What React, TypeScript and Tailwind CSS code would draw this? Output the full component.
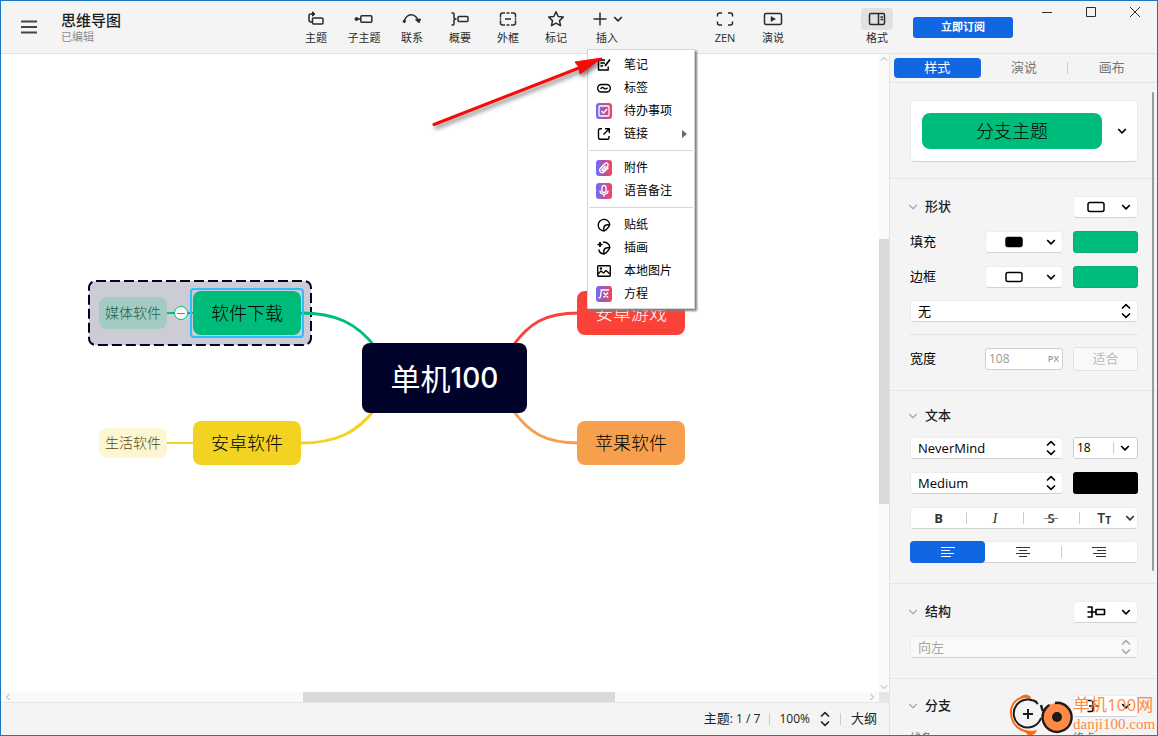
import type { ReactNode } from "react";

type IconProps = { children: ReactNode; w?: number; h?: number; sw?: number };

// viewBox is always 1:1 with the drawn size
const Icon = ({ children, w = 18, h = 18, sw = 1.5 }: IconProps) => (
  <svg
    width={w}
    height={h}
    viewBox={`0 0 ${w} ${h}`}
    fill="none"
    stroke="currentColor"
    strokeWidth={sw}
    strokeLinejoin="round"
    className="shrink-0"
  >
    {children}
  </svg>
);

const Down = ({ sw = 1.7 }: { sw?: number }) => (
  <Icon w={10} h={8} sw={sw}>
    <path d="M1.2 2 5 5.8 8.8 2" />
  </Icon>
);

const UpDown = () => (
  <Icon w={10} h={16} sw={1.6}>
    <path d="M1 5.5 5 1.700l4 3.800M1 10.500l4 3.800 4-3.800" />
  </Icon>
);

const BraceIcon = () => (
  <Icon w={20} h={14} sw={1.6}>
    <path d="M1.500 2H6v10H1.500M1.500 7H10" />
    <rect x="10" y="4.500" width="8.500" height="5" />
  </Icon>
);

const BranchIcon = () => (
  <Icon w={20} h={14} sw={1.6}>
    <path d="M1.500 1.500H5q2 0 2 2v7q0 2-2 2H1.500M3 7h4M9.500 7h3" />
  </Icon>
);

const tools = [
  {
    label: "主题",
    icon: (
      <Icon>
        <path d="M6 4H4Q2 4 2 6v4q0 2 2 2h1" />
        <path d="M5.500 1.800 8 4 5.500 6.200z" fill="currentColor" strokeWidth="1" />
        <rect x="5.500" y="8" width="10.500" height="6" rx="1" />
      </Icon>
    ),
  },
  {
    label: "子主题",
    icon: (
      <Icon w={20}>
        <circle cx="2.500" cy="9" r="1.500" fill="currentColor" strokeWidth="1" />
        <path d="M3 9h4" />
        <rect x="6.800" y="5.800" width="11" height="6.400" rx="1" />
      </Icon>
    ),
  },
  {
    label: "联系",
    icon: (
      <Icon w={20}>
        <path d="M2 11.500C5 2.500 13 2.500 16.500 11" />
        <path d="m13.500 9.800 5-.8-1.300 3.700z" fill="currentColor" strokeWidth="1" />
        <circle cx="2.300" cy="11.300" r=".9" fill="currentColor" />
      </Icon>
    ),
  },
  {
    label: "概要",
    icon: (
      <Icon w={20}>
        <path d="M1.500 3H3q1 0 1 1v3.500q0 1.500 2 1.500-2 0-2 1.500V14q0 1-1 1H1.500" />
        <rect x="8" y="6.500" width="10" height="5" rx="1" />
      </Icon>
    ),
  },
  {
    label: "外框",
    icon: (
      <Icon>
        <path d="M1.500 7.500V5q0-2 2-2H6M7.500 3h3M12 3h2.500q2 0 2 2v2.500M16.500 10.500V13q0 2-2 2H12M10.500 15h-3M6 15H3.500q-2 0-2-2v-2.500M1.500 8.300v1.500M16.500 8.300v1.500" />
        <path d="M6 9h6" />
      </Icon>
    ),
  },
  {
    label: "标记",
    icon: (
      <Icon>
        <path d="m9 1.800 2.200 4.700 5.100.6-3.800 3.500 1 5.100L9 13.200l-4.500 2.500 1-5.100L1.700 7.100l5.100-.6z" />
      </Icon>
    ),
  },
];

const rightTools = [
  {
    label: "ZEN",
    icon: (
      <Icon>
        <path d="M1.500 6.500V5q0-2 2-2H6M12 3h2.500q2 0 2 2v1.500M16.500 11.500V13q0 2-2 2H12M6 15H3.500q-2 0-2-2v-1.500" />
      </Icon>
    ),
  },
  {
    label: "演说",
    icon: (
      <Icon w={20}>
        <rect x="1.500" y="3.500" width="17" height="11" rx="1.500" />
        <path d="m8 6.500 4.500 2.500L8 11.500z" fill="currentColor" strokeWidth=".5" />
      </Icon>
    ),
  },
];

// gradient tile used by the paid features
const Badge = ({ children }: { children: ReactNode }) => (
  <span className="flex h-4 w-4 items-center justify-center rounded-[3px] bg-linear-to-r from-[#6d6cfb] via-[#b04fa8] to-[#fb3d48] text-white">
    <svg width="16" height="16" viewBox="0 0 16 16" fill="none" stroke="currentColor" strokeWidth="1.3">
      {children}
    </svg>
  </span>
);

const Small = ({ children }: { children: ReactNode }) => (
  <Icon w={16} h={16} sw={1.4}>
    {children}
  </Icon>
);

const menuGroups = [
  [
    {
      label: "笔记",
      icon: (
        <Small>
          <path d="M9 3H2.500v10h9.700V9.500M4.500 6H9M4.500 9H7" />
          <path d="m9 9 5-6.500" strokeWidth="1.800" />
        </Small>
      ),
    },
    {
      label: "标签",
      icon: (
        <Small>
          <rect x="1.700" y="4.500" width="12.600" height="7.500" rx="3.700" />
          <path d="M4.500 8.700Q6.500 6.500 8 8.200t3.500-.5" />
        </Small>
      ),
    },
    {
      label: "待办事项",
      icon: (
        <Badge>
          <rect x="3" y="3" width="10" height="10" rx="1" />
          <path d="m5.500 8 2 2 3.500-4" />
        </Badge>
      ),
    },
    {
      label: "链接",
      sub: true,
      icon: (
        <Small>
          <path d="M6 2.700H4q-1.500 0-1.500 1.500v7.600q0 1.500 1.500 1.500h7.500q1.500 0 1.500-1.500V10M9 2.700h4.300V7M13 3 7.500 8.500" />
        </Small>
      ),
    },
  ],
  [
    {
      label: "附件",
      icon: (
        <Badge>
          <path d="m12.500 7.500-4.300 4.300c-2.800 2.500-6-.8-3.700-3.600l4.300-4.500c2-1.800 4.500.6 2.800 2.600L7.500 10.500c-1.200.9-2.200-.2-1.300-1.300l3.300-3.500" />
        </Badge>
      ),
    },
    {
      label: "语音备注",
      icon: (
        <Badge>
          <rect x="6" y="2.500" width="4" height="7" rx="2" />
          <path d="M4 7.500c0 5 8 5 8 0M8 11.300v2.500" />
        </Badge>
      ),
    },
  ],
  [
    {
      label: "贴纸",
      icon: (
        <Small>
          <path d="M8 14A5.800 5.800 0 1 1 13.800 7.500C13.500 9.500 10 13.500 8 14q-1-5 2-6 2-.6 3.800-.5" />
        </Small>
      ),
    },
    {
      label: "插画",
      icon: (
        <Small>
          <path d="M7 2.300a5.700 5.700 0 0 1 6.800 5.200C13.500 9.500 10 13.500 8 14a5.800 5.800 0 0 1-5.300-4.500M8 14q-1-5 2-6 2-.6 3.800-.5" />
          <path d="M4 2v5M1.500 4.500h5" strokeWidth="1.700" />
        </Small>
      ),
    },
    {
      label: "本地图片",
      icon: (
        <Small>
          <rect x="1.700" y="2.700" width="12.600" height="10.600" rx="1" />
          <path d="m2 11 3-3 2.500 2L10 7.500l4 3.500" />
          <circle cx="5" cy="5.500" r=".6" />
        </Small>
      ),
    },
    {
      label: "方程",
      icon: (
        <Badge>
          <path d="M2.500 11.500q1.700.8 2-1L5.300 4H13M7.500 6.500l4.500 5M12 6.500l-4.500 5" />
        </Badge>
      ),
    },
  ],
];

function InsertMenu() {
  return (
    <div
      role="menu"
      className="absolute top-12 left-[7px] z-20 w-[108px] border border-[#d4d4d4] bg-white py-[3px] text-xs text-black shadow-[2px_2px_2px_#808080]"
    >
      {menuGroups.map((group, i) => (
        <div key={i}>
          {i > 0 && <div className="mx-px my-[5px] h-px bg-[#d8d8d8]" />}
          {group.map((item) => (
            <button key={item.label} role="menuitem" className="flex h-[23px] w-full items-center pr-[7px] pl-2">
              {item.icon}
              <span className="ml-3">{item.label}</span>
              {"sub" in item && (
                <span className="ml-auto border-y-4 border-l-[5px] border-y-transparent border-l-[#666]" />
              )}
            </button>
          ))}
        </div>
      ))}
    </div>
  );
}

const ToolButton = ({ label, icon }: { label: string; icon: ReactNode }) => (
  <button className="flex w-12 flex-col items-center">
    <span className="flex h-[22px] items-center">{icon}</span>
    <span className="text-[11px] leading-4">{label}</span>
  </button>
);

function Header() {
  return (
    <header className="flex h-[53px] shrink-0 border-b border-[#e3e3e3] text-[#2b2b2b]">
      <div className="flex w-[291px] shrink-0 pl-5">
        <button aria-label="menu" className="mt-[17px] h-[18px] text-[#444]">
          <Icon sw={1.8}>
            <path d="M0 3.500h16M0 9h16M0 14.500h16" />
          </Icon>
        </button>
        <div className="mt-[10px] ml-[22px]">
          <h1 className="text-[15px] leading-[18px] font-medium text-[#1d1d1d]">思维导图</h1>
          <p className="text-[11px] leading-4 text-[#8b8b8b]">已编辑</p>
        </div>
      </div>
      <nav className="flex pt-[7px]">
        {tools.map((t) => (
          <ToolButton key={t.label} {...t} />
        ))}
      </nav>
      <div className="relative w-[54px] pt-[7px]">
        <button className="flex w-full flex-col items-center">
          <span className="flex h-[22px] items-center gap-1">
            <Icon>
              <path d="M9 2.500v13M2.500 9h13" />
            </Icon>
            <Down />
          </span>
          <span className="text-[11px] leading-4">插入</span>
        </button>
        <InsertMenu />
      </div>
      <nav className="ml-[67px] flex pt-[7px]">
        {rightTools.map((t) => (
          <ToolButton key={t.label} {...t} />
        ))}
      </nav>
      <div className="ml-auto flex">
        <button className="flex w-12 flex-col items-center pt-[7px]">
          <span className="flex h-[22px] w-8 items-center justify-center rounded bg-[#e1e1e1]">
            <Icon>
              <rect x="1.500" y="3.500" width="15" height="11" rx="1.500" />
              <path d="M10.500 3.500v11M12.500 7H15M12.500 9.500H15" />
            </Icon>
          </span>
          <span className="text-[11px] leading-4">格式</span>
        </button>
        <button className="mt-4 ml-3 h-[21px] w-[100px] rounded-[3px] bg-[#1166e1] text-[11px] font-bold text-white">
          立即订阅
        </button>
        <div className="ml-3 flex h-[22px]">
          <button aria-label="minimize" className="flex w-11 items-center justify-center">
            <Icon w={12} h={12} sw={1}>
              <path d="M1 6.500h10" />
            </Icon>
          </button>
          <button aria-label="maximize" className="flex w-11 items-center justify-center">
            <Icon w={12} h={12} sw={1}>
              <rect x="1.500" y="1.500" width="9" height="9" />
            </Icon>
          </button>
          <button aria-label="close" className="flex w-11 items-center justify-center">
            <Icon w={12} h={12} sw={1}>
              <path d="m1 1 10 10M11 1 1 11" />
            </Icon>
          </button>
        </div>
      </div>
    </header>
  );
}

const node = "absolute flex items-center justify-center whitespace-nowrap font-light";

function MindMap() {
  return (
    <div className="relative min-w-0 flex-1 overflow-hidden bg-white text-black">
      <div className="absolute top-[226px] left-[87px] h-[66px] w-[224px]">
        <svg width="224" height="66">
          <rect
            x="1"
            y="1"
            width="222"
            height="64"
            rx="7"
            fill="#000229"
            fillOpacity=".2"
            stroke="#000229"
            strokeWidth="2"
            strokeDasharray="10 4"
          />
        </svg>
      </div>
      <svg className="absolute top-0 left-0" width="878" height="638" fill="none" strokeWidth="3">
        <path d="M300 259c34 0 56 10 74 34" stroke="#00bc7b" />
        <path d="M300 389c34 0 56-10 74-34" stroke="#f3d321" />
        <path d="M578 259c-34 0-50 10-67 34" stroke="#fb4239" />
        <path d="M578 389c-34 0-50-10-67-34" stroke="#f6a04d" />
        <path d="M165 259h28" stroke="#00bc7b" strokeWidth="2" />
        <path d="M165 389h28" stroke="#f3d321" strokeWidth="2" />
      </svg>
      <div className={`${node} top-[243px] left-[98px] h-8 w-[68px] rounded-lg bg-[#a3cbc2] text-sm text-[#1b5c4b]`}>
        媒体软件
      </div>
      <button
        aria-label="collapse"
        className={`${node} top-[252px] left-[173px] h-[14px] w-[14px] rounded-full border border-[#00bc7b] bg-white`}
      >
        <span className="h-px w-2 bg-[#00bc7b]" />
      </button>
      <div className={`${node} top-[234px] left-[189px] h-[50px] w-[114px] rounded border-2 border-[#2ebdff]`}>
        <div className="flex h-11 w-[108px] items-center justify-center rounded-lg bg-[#00bc7b] text-lg">软件下载</div>
      </div>
      <div className="absolute top-[289px] left-[361px] flex h-[70px] w-[165px] items-center justify-center rounded-lg bg-[#000229] text-[30px] text-white">
        单机<span className="font-['Inter',sans-serif] text-[28px] font-medium">100</span>
      </div>
      <div className={`${node} top-[374px] left-[98px] h-[30px] w-[68px] rounded-lg bg-[#fdf6d3] text-sm text-[#554a0c]`}>
        生活软件
      </div>
      <div className={`${node} top-[367px] left-[192px] h-11 w-[108px] rounded-lg bg-[#f3d321] text-lg`}>安卓软件</div>
      <div className={`${node} top-[237px] left-[576px] h-11 w-[108px] rounded-lg bg-[#fb4239] text-lg text-white`}>
        安卓游戏
      </div>
      <div className={`${node} top-[367px] left-[576px] h-11 w-[108px] rounded-lg bg-[#f6a04d] text-lg`}>苹果软件</div>
    </div>
  );
}

// hand-placed pointer over the insert menu
const Pointer = () => (
  <svg
    className="pointer-events-none absolute top-[49px] left-[428px] z-30 drop-shadow-[2px_3px_2px_rgba(0,0,0,0.5)]"
    width="180"
    height="84"
  >
    <path d="M5 74.500 150 18" stroke="#fb0a05" strokeWidth="3" strokeLinecap="round" />
    <path d="m173 8-27 4 4 5 1 7z" fill="#fb0a05" stroke="#fb0a05" />
  </svg>
);

function Canvas() {
  return (
    <main className="flex min-w-0 flex-1 flex-col">
      <div className="flex min-h-0 flex-1">
        <MindMap />
        <div className="relative flex w-[10px] flex-col items-center justify-between bg-[#fafafa] py-[2px] text-[#aaa]">
          <Icon w={8} h={6} sw={1}>
            <path d="m1 4.500 3-3 3 3" />
          </Icon>
          <div className="absolute top-[29%] h-[265px] w-[10px] bg-[#d9d9d9]" />
          <Icon w={8} h={6} sw={1}>
            <path d="m1 1.500 3 3 3-3" />
          </Icon>
        </div>
      </div>
      <div className="flex h-[10px] shrink-0 text-[#aaa]">
        <div className="relative flex flex-1 items-center justify-between bg-[#fafafa] px-1">
          <Icon w={6} h={8} sw={1}>
            <path d="m4.500 1-3 3 3 3" />
          </Icon>
          <div className="absolute left-[302px] h-[10px] w-[312px] bg-[#d9d9d9]" />
          <Icon w={6} h={8} sw={1}>
            <path d="m1.500 1 3 3-3 3" />
          </Icon>
        </div>
        <div className="w-[10px] bg-[#e6e6e6]" />
      </div>
      <footer className="flex h-[33px] shrink-0 items-center justify-end border-t border-[#e6e6e6] pr-3 text-[13px] text-[#222]">
        <span className="text-xs">
          <span className="text-[13px]">主题</span>: 1 / 7
        </span>
        <span className="mx-[9px] h-3 w-px bg-[#ccc]" />
        <button className="flex items-center gap-[10px] text-xs">
          100%
          <UpDown />
        </button>
        <span className="mx-[10px] h-3 w-px bg-[#ccc]" />
        <button>大纲</button>
      </footer>
    </main>
  );
}

const box = "h-[22px] rounded-[4px] border border-[#ececec] border-b-[#d2d2d2] bg-white";

type SelectProps = { label: string; value: string; className?: string; disabled?: boolean };

function Select({ label, value, className = "", disabled }: SelectProps) {
  return (
    <div className={`relative ${className}`}>
      <select
        aria-label={label}
        disabled={disabled}
        className={`${box} block w-full appearance-none pl-[7px] text-[13px] leading-5 disabled:bg-[#f9f9f9] disabled:text-[#a5a5a5] disabled:opacity-100`}
      >
        <option>{value}</option>
      </select>
      <span className={`pointer-events-none absolute top-[3px] right-[7px] ${disabled ? "text-[#aaa]" : ""}`}>
        <UpDown />
      </span>
    </div>
  );
}

const IconSelect = ({ label, children, wide }: { label: string; children: ReactNode; wide?: boolean }) => (
  <button
    aria-label={label}
    className={`${box} flex items-center justify-between pr-[6px] ${wide ? "w-[78px] pl-[18px]" : "w-[65px] pl-3"}`}
  >
    {children}
    <Down />
  </button>
);

const RoundRect = ({ fill = "none" }: { fill?: string }) => (
  <Icon w={20} h={12}>
    <rect x="2" y="1.500" width="16" height="9" rx="2" fill={fill} />
  </Icon>
);

const Title = ({ name, children }: { name: string; children?: ReactNode }) => (
  <div className="flex h-[22px] items-center justify-between">
    <h2 className="flex items-center gap-[7px] text-[13px] font-medium text-[#1d1d1d]">
      <span className="-ml-[2px] text-[#aaa]">
        <Down sw={1.3} />
      </span>
      {name}
    </h2>
    {children}
  </div>
);

const Sep = () => <span className="h-3 w-px bg-[#ccc]" />;

const alignLines = [
  "M1 1.500h14M1 4.500h9M1 7.500h13M1 10.500h10",
  "M1 1.500h14M4 4.500h8M1 7.500h14M4 10.500h8",
  "M1 1.500h14M6 4.500h9M2 7.500h13M5 10.500h10",
];

const AlignIcon = ({ d }: { d: string }) => (
  <Icon w={16} h={12} sw={1}>
    <path d={d} />
  </Icon>
);

function FormatPanel() {
  return (
    <aside className="flex w-[268px] shrink-0 flex-col overflow-hidden border-l border-[#e3e3e3] text-[13px] text-black">
      <div className="flex h-[29px] shrink-0 items-center border-b border-[#e3e3e3] pr-[2px] pl-1 text-[#777]">
        <button className="h-5 flex-1 rounded bg-[#1166e1] text-white">样式</button>
        <button className="flex-1">演说</button>
        <Sep />
        <button className="flex-1">画布</button>
      </div>
      <div className="relative min-h-0 flex-1 overflow-hidden">
        <div className="absolute top-[9px] right-[3px] h-[479px] w-[2px] rounded bg-[#9c9c9c]" />

        <section className="border-b border-[#e6e6e6] pt-[17px] pr-[19px] pb-4 pl-5">
          <button className="flex h-[62px] w-full items-center justify-between rounded border border-[#ececec] border-b-[#d0d0d0] bg-white pr-[10px] pl-[11px]">
            <span className="mr-[15px] flex h-9 flex-1 items-center justify-center rounded-lg bg-[#00bc7b] text-lg font-light">
              分支主题
            </span>
            <Down />
          </button>
        </section>

        <section className="border-b border-[#e6e6e6] pt-[17px] pr-[19px] pb-[19px] pl-5">
          <Title name="形状">
            <IconSelect label="形状">
              <RoundRect />
            </IconSelect>
          </Title>
          <div className="mt-[13px] flex h-[22px] items-center gap-[10px]">
            <span className="flex-1">填充</span>
            <IconSelect label="填充" wide>
              <RoundRect fill="black" />
            </IconSelect>
            <button aria-label="填充颜色" className="h-[22px] w-[65px] rounded-[3px] border border-[#0bab73] bg-[#00bc7b]" />
          </div>
          <div className="mt-[13px] flex h-[22px] items-center gap-[10px]">
            <span className="flex-1">边框</span>
            <IconSelect label="边框" wide>
              <RoundRect />
            </IconSelect>
            <button aria-label="边框颜色" className="h-[22px] w-[65px] rounded-[3px] border border-[#0bab73] bg-[#00bc7b]" />
          </div>
          <Select label="边框样式" value="无" className="mt-3" />
          <div className="mt-3 h-px bg-[#e3e3e3]" />
          <div className="mt-3 flex h-6 items-center gap-[10px]">
            <label htmlFor="width" className="flex-1">
              宽度
            </label>
            <div className="flex h-[22px] w-[78px] items-center rounded-[3px] border border-[#cfcfcf] bg-white px-[3px] text-[#999]">
              <input id="width" defaultValue="108" className="w-0 flex-1 text-xs outline-none" />
              <span className="text-[9px] font-semibold">PX</span>
            </div>
            <button disabled className="h-6 w-[65px] rounded-[3px] border border-[#e3e3e3] bg-[#f9f9f9] text-[#bbb]">
              适合
            </button>
          </div>
        </section>

        <section className="border-b border-[#e6e6e6] pt-[14px] pr-[19px] pb-5 pl-5">
          <Title name="文本" />
          <div className="mt-[10px] flex gap-[10px]">
            <Select label="字体" value="NeverMind" className="flex-1" />
            <div className="flex h-[22px] w-[65px] items-center rounded-[3px] border border-[#cfcfcf] bg-white pr-[7px] pl-[3px]">
              <input aria-label="字号" defaultValue="18" className="w-0 flex-1 text-xs outline-none" />
              <Sep />
              <span className="ml-[6px]">
                <Down />
              </span>
            </div>
          </div>
          <div className="mt-[13px] flex gap-[10px]">
            <Select label="字重" value="Medium" className="flex-1" />
            <button aria-label="文字颜色" className="h-[22px] w-[65px] rounded-[3px] bg-black" />
          </div>
          <div className={`${box} mt-[13px] flex items-center text-[#333]`}>
            <button className="flex-1 leading-5 font-bold">B</button>
            <Sep />
            <button className="flex-1 font-['Liberation_Serif',serif] text-[15px] leading-5 italic">I</button>
            <Sep />
            <button className="flex-1 leading-5 font-semibold">
              <span className="line-through decoration-[#888]">&nbsp;S&nbsp;</span>
            </button>
            <Sep />
            <button className="flex flex-1 items-center justify-end pr-[2px] leading-5">
              <span className="text-sm font-semibold">T</span>
              <span className="mt-1 mr-[14px] text-[10px] font-bold">T</span>
              <Down />
            </button>
          </div>
          <div className={`${box} mt-3 flex items-center text-[#333]`}>
            <button
              aria-label="左对齐"
              className="-my-px -ml-px flex h-[22px] flex-1 items-center justify-center rounded-[4px] bg-[#1166e1] text-white"
            >
              <AlignIcon d={alignLines[0]} />
            </button>
            <button aria-label="居中" className="flex h-5 flex-1 items-center justify-center">
              <AlignIcon d={alignLines[1]} />
            </button>
            <Sep />
            <button aria-label="右对齐" className="flex h-5 flex-1 items-center justify-center">
              <AlignIcon d={alignLines[2]} />
            </button>
          </div>
        </section>

        <section className="border-b border-[#e6e6e6] pt-[17px] pr-[19px] pb-5 pl-5">
          <Title name="结构">
            <IconSelect label="结构">
              <BraceIcon />
            </IconSelect>
          </Title>
          <Select label="方向" value="向左" className="mt-[13px]" disabled />
        </section>

        <section className="pt-4 pr-[19px] pl-5">
          <Title name="分支">
            <IconSelect label="分支">
              <BranchIcon />
            </IconSelect>
          </Title>
          <div className="mt-[13px] flex text-[11px] leading-4 text-[#777]">
            <span className="flex-1">线条</span>
            <span className="w-[65px]">终点</span>
          </div>
        </section>
      </div>
    </aside>
  );
}

const Watermark = () => (
  <div className="pointer-events-none absolute right-[2px] bottom-0 z-30 flex items-center text-[#ff8a45]">
    <svg width="64" height="42" viewBox="0 0 64 42" fill="none">
      <path d="M21 4C10 2 1 10 2 21s9 18 21 18" stroke="#ff6a0d" strokeWidth="2" />
      <path d="M11 4q6-5 11 0l-1 2q-5-2-10-2z" fill="#ff6a0d" />
      <path d="M15 38q6 1 13-1-2 6-9 5z" fill="#ff6a0d" />
      <path d="M29 11A14 14 0 1 0 32 25M21 7q4 0 7 2" stroke="#1f1a1c" strokeWidth="2" />
      <path d="M19 16v10M14 21h10" stroke="#1f1a1c" strokeWidth="2" />
      <path d="M32 12q1 4 2 6M41 12q-7 4-7 13" stroke="#1f1a1c" strokeWidth="2.500" />
      <circle cx="48" cy="24" r="14" fill="#ff8a45" />
      <path d="M46 10a14.500 14.500 0 1 1-9 5l3-3" stroke="#1f1a1c" strokeWidth="2.400" />
      <circle cx="48" cy="24" r="5" fill="#1f1a1c" />
    </svg>
    <div className="w-[82px] whitespace-nowrap">
      <p className="text-[17px] leading-5">单机100网</p>
      <p className="font-['Liberation_Serif',serif] text-[15px] leading-[18px]">danji100.com</p>
    </div>
  </div>
);

export default function App() {
  return (
    <div className="relative flex h-screen w-full flex-col overflow-hidden border border-[#1d78c4] bg-[#f4f4f4] font-['Open_Sans','Noto_Sans_CJK_SC',sans-serif]">
      <Header />
      <div className="flex min-h-0 flex-1">
        <Canvas />
        <FormatPanel />
      </div>
      <Pointer />
      <Watermark />
    </div>
  );
}
